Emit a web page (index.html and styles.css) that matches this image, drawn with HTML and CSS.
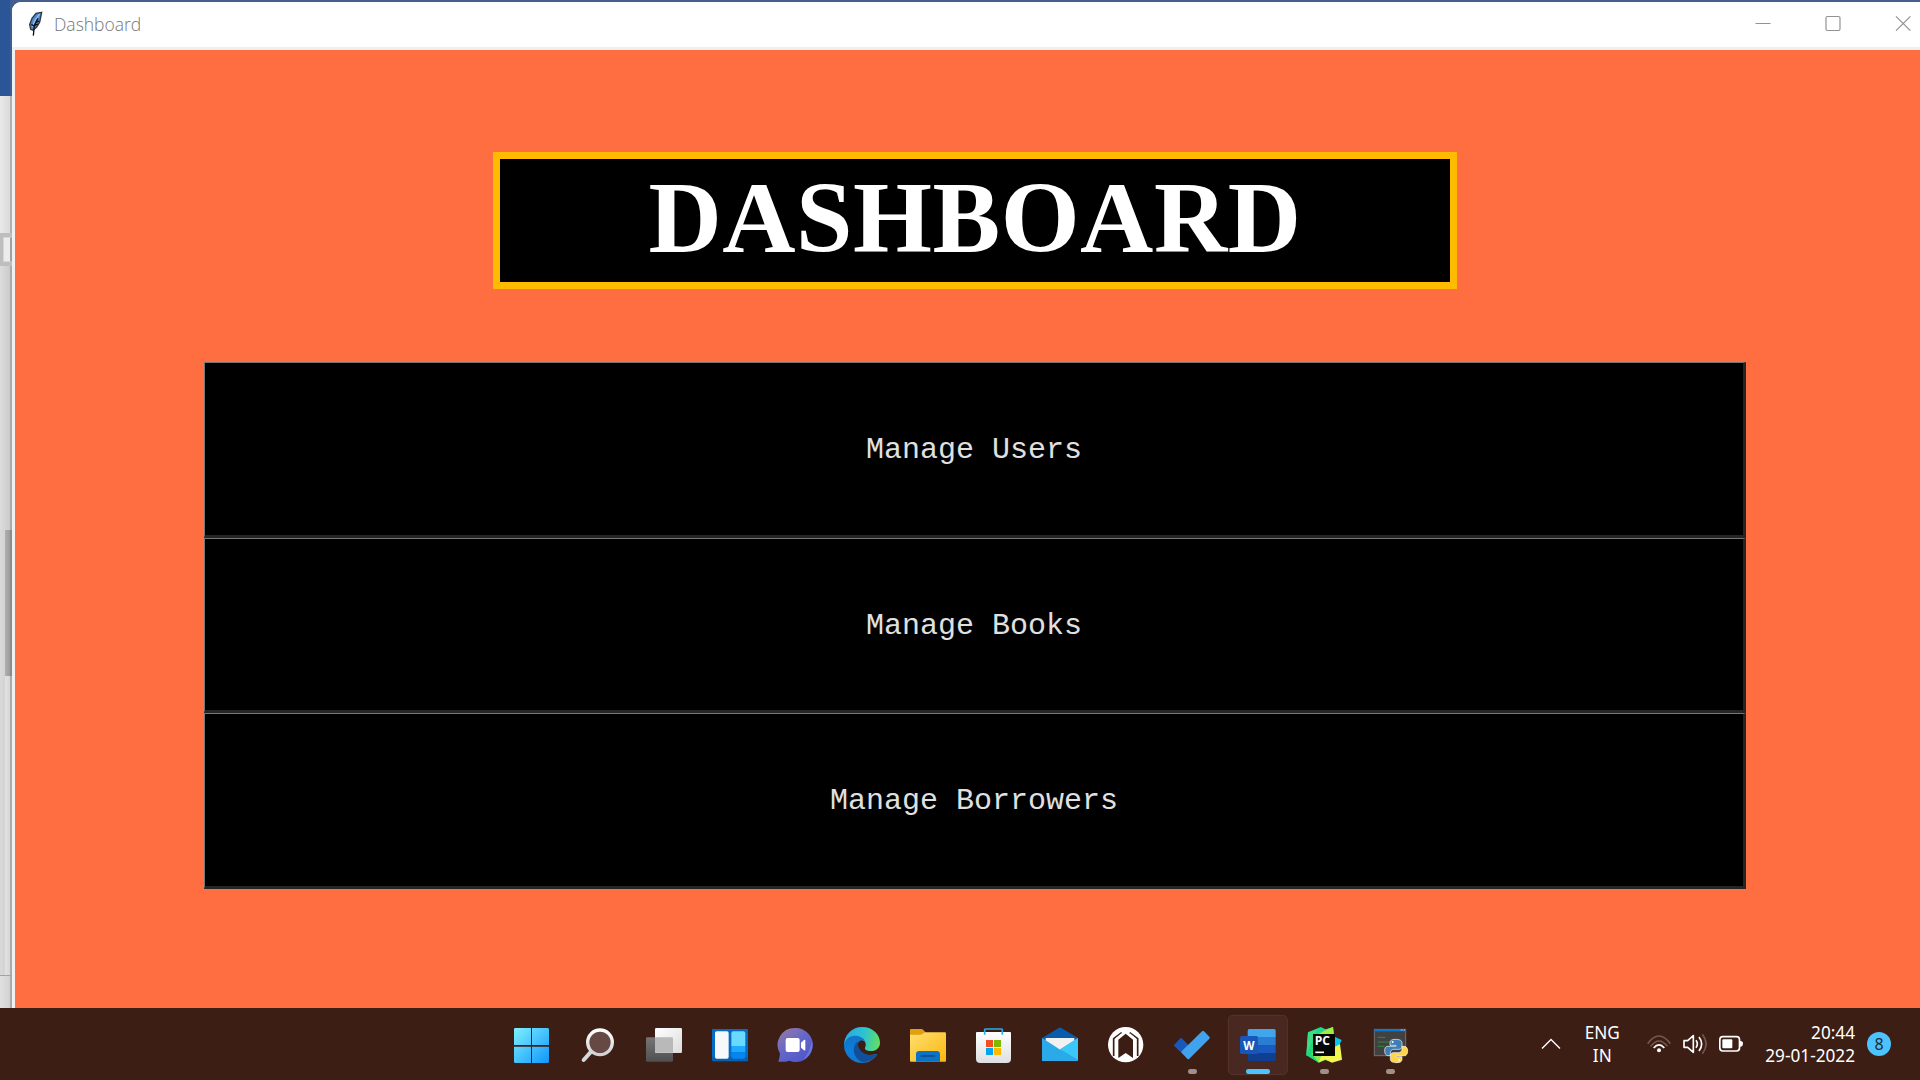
FILE: index.html
```html
<!DOCTYPE html>
<html lang="en">
<head>
<meta charset="utf-8">
<title>Dashboard</title>
<link rel="stylesheet" href="styles.css">
</head>
<body>
<div class="desktop">
  <aside class="backdrop">
    <div class="backdrop-head"></div>
    <div class="backdrop-page"></div>
    <div class="backdrop-ruler"><i></i></div>
    <div class="backdrop-page grow"></div>
    <div class="backdrop-thumb"></div>
    <div class="backdrop-track"></div>
    <div class="backdrop-foot"></div>
  </aside>
  <section class="window">
    <header class="titlebar">
      <svg class="feather" width="16" height="26" viewBox="0 0 48 78">
        <path d="M41 4 24 7 12 22 5 41 8 55 15 58 26 48 35 34 38 19z" fill="#4b8ad0" stroke="#34363a" stroke-width="4"/>
        <path d="M35 9 20 29 13 48" fill="none" stroke="#8fc0ee" stroke-width="4"/>
        <path d="M30 22 19 43 16 74M18 44l12-5M22 35l12-5M10 40l8 5" fill="none" stroke="#111" stroke-width="4"/>
      </svg>
      <span class="caption">Dashboard</span>
      <div class="controls">
        <svg width="16" height="16" viewBox="0 0 16 16"><path d="M.5 7.500h15"/></svg>
        <svg width="16" height="16" viewBox="0 0 16 16"><rect x="1" y=".5" width="14" height="14" rx="1.5"/></svg>
        <svg width="16" height="16" viewBox="0 0 16 16"><path d="M1 .3l14.400 14.400M15.400.3 1 14.700"/></svg>
      </div>
    </header>
    <main class="client">
      <h1 class="banner">DASHBOARD</h1>
      <nav class="menu">
        <button class="item">Manage Users</button>
        <button class="item">Manage Books</button>
        <button class="item">Manage Borrowers</button>
      </nav>
    </main>
  </section>
</div>
<footer class="taskbar">
  <div class="apps">
    <svg class="app" viewBox="-3 24 198 216">
      <defs><linearGradient id="win" gradientUnits="userSpaceOnUse" x1="42" y1="84" x2="147" y2="189"><stop offset="0" stop-color="#7df1ff"/><stop offset="1" stop-color="#0f96fb"/></linearGradient></defs>
      <path fill="url(#win)" d="M46 84h47v51H42V88q0-4 4-4zM96 84h46q5 0 5 4v47H96zM42 140h51v49H46q-4 0-4-4zM96 140h51v45q0 4-5 4H96z"/>
    </svg>
    <svg class="app" viewBox="195 24 198 216">
      <defs><linearGradient id="lens" x1="0" y1="0" x2="0" y2="1"><stop offset="0" stop-color="#fff"/><stop offset="1" stop-color="#cfd1d3"/></linearGradient></defs>
      <path d="M274 154 251 180" stroke="#d5d7d9" stroke-width="12" stroke-linecap="round"/>
      <circle cx="300" cy="127" r="37" fill="#674943" stroke="url(#lens)" stroke-width="10"/>
    </svg>
    <svg class="app" viewBox="393 24 198 216">
      <defs><linearGradient id="tv" x1="0" y1="0" x2="1" y2="1"><stop offset="0" stop-color="#fff"/><stop offset="1" stop-color="#dcdcdc"/></linearGradient>
      <linearGradient id="tv2" x1="0" y1="0" x2="0" y2="1"><stop offset="0" stop-color="#757575"/><stop offset="1" stop-color="#505050"/></linearGradient></defs>
      <rect x="438" y="112" width="81" height="73" rx="4" fill="url(#tv2)"/>
      <rect x="465" y="84" width="81" height="75" rx="4" fill="url(#tv)"/>
      <path d="M465 112h50q4 0 4 4v42h-50q-4 0-4-4z" fill="#b9b9b9"/>
    </svg>
    <svg class="app" viewBox="591 24 198 216">
      <rect x="636" y="87" width="108" height="97" rx="3" fill="#066bc3"/>
      <path d="M636 170h108v11q0 3-3 3H639q-3 0-3-3z" fill="#07549d" opacity=".5"/>
      <rect x="645" y="94" width="41" height="82" rx="5" fill="#f7f8fa"/>
      <path d="M700 94h30q6 0 6 6v38h-42v-38q0-6 6-6z" fill="#69d9ff"/>
      <path d="M694 138h42v19h-42z" fill="#1eaaff"/>
      <path d="M694 157h42v13q0 6-6 6h-30q-6 0-6-6z" fill="#0685ee"/>
    </svg>
    <svg class="app" viewBox="789 24 198 216">
      <defs><linearGradient id="chat" x1=".1" y1=".1" x2=".8" y2="1"><stop offset="0" stop-color="#9076a9"/><stop offset=".45" stop-color="#6467c8"/><stop offset="1" stop-color="#4f54cb"/></linearGradient></defs>
      <path d="M886 84a51 51 0 1 1-18 98q-15 5-33 3 4-13 5-24a51 51 0 0 1 46-77z" fill="url(#chat)"/>
      <path d="M936 122a51 51 0 0 1-26 57q20-26 26-57z" fill="#7698f4" opacity=".5"/>
      <rect x="857" y="114" width="42" height="42" rx="6" fill="#fff"/>
      <path d="M903 128l9-8q4-2 4 2v27q0 4-4 2l-9-8z" fill="#fff"/>
    </svg>
    <svg class="app" viewBox="27 24 198 216">
      <defs>
        <linearGradient id="edgeTop" gradientUnits="userSpaceOnUse" x1="76" y1="110" x2="180" y2="130"><stop offset="0" stop-color="#2aa9e0"/><stop offset=".5" stop-color="#2bc3d2"/><stop offset="1" stop-color="#65e05c"/></linearGradient>
        <linearGradient id="edgeLow" x1="0" y1="0" x2="0" y2="1"><stop offset="0" stop-color="#1173c8"/><stop offset=".6" stop-color="#0a7fdd"/><stop offset="1" stop-color="#1b73c8"/></linearGradient>
      </defs>
      <path d="M72 135a54 54 0 0 1 54-54c34 0 54 24 54 47 0 15-11 25-27 25-13 0-20-5-18-10 5-10 2-21-10-23-22-2-40 3-53 15z" fill="url(#edgeTop)"/>
      <path d="M72 135c4-17 16-28 32-28 15 0 26 6 32 16-9-5-21-1-23 10-3 18 13 36 38 32l21-3c-9 17-26 27-46 27a54 54 0 0 1-54-54z" fill="url(#edgeLow)"/>
      <path d="M113 124c-20 19-14 49 14 63 19-1 36-10 46-25-19 7-39 3-50-9-8-8-11-18-10-29z" fill="#10509a"/>
    </svg>
    <svg class="app" viewBox="225 24 198 216">
      <defs><linearGradient id="fold" x1="0" y1="0" x2="1" y2="1"><stop offset="0" stop-color="#ffdf72"/><stop offset="1" stop-color="#fbb70c"/></linearGradient></defs>
      <path d="M273 87h31q4 0 6 3l8 8h-4v20h-44V90q0-3 3-3z" fill="#dfa011"/>
      <path d="M270 104h32q5 0 8-4 3-3 7-3h58q3 0 3 3v82q0 3-3 3H273q-3 0-3-3z" fill="url(#fold)"/>
      <path d="M288 185v-22q0-10 10-10h52q10 0 10 10v22z" fill="#0b72c6"/>
      <path d="M304 168h39" stroke="#0c4b85" stroke-width="5" stroke-linecap="round"/>
    </svg>
    <svg class="app" viewBox="423 24 198 216">
      <defs><linearGradient id="bag" x1="0" y1="0" x2="0" y2="1"><stop offset="0" stop-color="#fff"/><stop offset="1" stop-color="#dedfe0"/></linearGradient></defs>
      <path d="M471 96h99q3 0 3 3v77q0 13-13 13h-79q-13 0-13-13V99q0-3 3-3z" fill="url(#bag)"/>
      <path d="M494 104V89q0-2 2-2h49q2 0 2 2v15" fill="none" stroke="#2aaeea" stroke-width="5"/>
      <path d="M498 120h21v21h-21z" fill="#f25022"/><path d="M522 120h21v21h-21z" fill="#7fba00"/>
      <path d="M498 144h21v21h-21z" fill="#00a4ef"/><path d="M522 144h21v21h-21z" fill="#ffb900"/>
    </svg>
    <svg class="app" viewBox="621 24 198 216">
      <defs><linearGradient id="mail" x1="0" y1="0" x2="1" y2="0"><stop offset="0" stop-color="#35b4ee"/><stop offset="1" stop-color="#30b8f2"/></linearGradient></defs>
      <path d="M666 114 716 84q4-3 8 0l50 30v20H666z" fill="#0a5cab"/>
      <path d="M677 114h86v18l-43 20-43-20z" fill="#f1f1f1"/>
      <path d="M666 114l54 35 54-35v69H666z" fill="#229ee3"/>
      <path d="M774 114v66l-54-32z" fill="#3bc8f8"/>
      <path d="M666 114 774 183H669q-3 0-3-3z" fill="url(#mail)" opacity=".5"/>
    </svg>
    <svg class="app" viewBox="819 24 198 216">
      <circle cx="917" cy="134" r="53" fill="#fff"/>
      <g fill="none" stroke="#3b1d14" stroke-width="5">
        <path d="M881 168v-52l24-18M953 168v-52l-24-18"/>
      </g>
      <path d="M895 174v-55l22-18 22 18v55l-22-15z" fill="#3b1d14"/>
      <path d="M889 174v-58l17-14M945 174v-58l-17-14" fill="none" stroke="#fff" stroke-width="5"/>
    </svg>
    <svg class="app" viewBox="57 24 198 216">
      <path d="M121 115q2-2 4 0l32 31-13 32-41-40q-2-2 0-4z" fill="#1858bd"/>
      <path d="M186 94q3-3 6 0l16 16q3 3 0 6l-60 60q-3 3-6 0l-17-18q-2-2 0-4z" fill="#41a3ee"/>
      <rect class="dot" x="144" y="207" width="27" height="15" rx="7"/>
    </svg>
    <svg class="app" viewBox="255 24 198 216">
      <rect x="265" y="46" width="177" height="178" rx="14" fill="#482820" stroke="#53352d" stroke-width="3"/>
      <path d="M328 87h74q5 0 5 5v19h-84V92q0-5 5-5z" fill="#41a5ee"/>
      <path d="M323 111h84v24h-84z" fill="#2b7cd3"/>
      <path d="M323 135h84v24h-84z" fill="#185abd"/>
      <path d="M323 159h84v19q0 5-5 5h-74q-5 0-5-5z" fill="#103f91"/>
      <rect x="300" y="108" width="54" height="54" rx="5" fill="#1856b8"/>
      <text x="327" y="149" class="word">W</text>
      <rect x="318" y="207" width="72" height="15" rx="7" fill="#4cc2ff"/>
    </svg>
    <svg class="app" viewBox="453 24 198 216">
      <path d="M584 110 605 120 593 147 580 150z" fill="#08c5ef"/>
      <path d="M504 97 542 81 557 88 579 81 582 105 525 112 518 170 499 166z" fill="#21d789"/>
      <path d="M557 90 579 81 582 105 530 106z" fill="#a5ec45"/>
      <path d="M504 97 530 90 519 120 518 168 499 166z" fill="#3ddc84"/>
      <path d="M499 166 518 120 524 165 545 168 536 188z" fill="#22d67a"/>
      <path d="M514 160 585 160 576 187 556 180 536 188z" fill="#8ee84e"/>
      <path d="M545 165 583 165 585 140 600 132 606 179 576 188 556 178 536 187z" fill="#f1f650"/>
      <rect x="519" y="102" width="66" height="66" fill="#050805"/>
      <path d="M526 157h26" stroke="#fff" stroke-width="5"/>
      <text x="524" y="136" class="pc">PC</text>
      <rect class="dot" x="540" y="207" width="27" height="15" rx="7"/>
    </svg>
    <svg class="app" viewBox="651 24 198 216">
      <rect x="703" y="88" width="94" height="79" fill="#414141" stroke="#73706f" stroke-width="3"/>
      <path d="M702 87h96v7h-96z" fill="#0878d4"/><path d="M782 90h13" stroke="#a8d6ff" stroke-width="3" stroke-dasharray="3 2"/>
      <path d="M713 112h23M713 126h42M713 139h20" stroke="#2e8d38" stroke-width="3"/>
      <path d="M767 118c-16 0-17 6-17 12v6h18v3h-25c-7 0-9 6-9 14s4 14 10 14h7v-8c0-7 4-11 11-11h15c6 0 9-4 9-9v-10c0-7-6-11-19-11z" fill="#3e7eb4" stroke="#fff" stroke-width="2"/>
      <path d="M769 188c16 0 17-6 17-12v-6h-18v-3h25c7 0 10-6 10-14s-4-14-10-14h-7v8c0 7-4 11-11 11h-15c-6 0-9 4-9 9v10c0 7 5 11 18 11z" fill="#ffd545" stroke="#fff" stroke-width="2"/>
      <circle cx="758" cy="126" r="3" fill="#fff"/><circle cx="778" cy="180" r="3" fill="#fff"/>
      <rect class="dot" x="738" y="207" width="27" height="15" rx="7"/>
    </svg>
  </div>
  <div class="tray">
    <svg class="chevron" width="20" height="12" viewBox="0 0 20 12"><path d="M1 10.5 10 1.5l9 9" fill="none" stroke="#fff" stroke-width="1.4"/></svg>
    <div class="lang">ENG<br>IN</div>
    <svg class="wifi" width="24" height="18" viewBox="0 0 72 54">
      <g fill="none" stroke-width="5"><path d="M2 26q34-46 68 0M11 34q25-32 50 0" stroke="#75584f"/><path d="M20 39q16-19 32 0" stroke="#fff"/></g>
      <circle cx="36" cy="46" r="6" fill="#fff"/>
    </svg>
    <svg class="sound" width="24" height="22" viewBox="0 0 72 66" fill="none" stroke="#fff" stroke-width="5" stroke-linejoin="round">
      <path d="M3 23h11L31 8v50L14 43H3z"/><path d="M39 22q8 11 0 22M48 12q16 21 0 42"/><path d="M58 4q23 29 0 58" stroke="#75584f"/>
    </svg>
    <svg class="battery" width="24" height="18" viewBox="0 0 72 54">
      <rect x="2.500" y="5" width="59" height="43" rx="9" fill="none" stroke="#fff" stroke-width="5"/>
      <rect x="10" y="13" width="30" height="27" rx="3" fill="#fff"/><path d="M62 18h3q7 0 7 8t-7 9h-3z" fill="#fff"/>
    </svg>
    <div class="clock">20:44<br>29-01-2022</div>
    <span class="badge">8</span>
  </div>
</footer>
</body>
</html>
```
FILE: styles.css
```css
* { box-sizing: border-box; }

body {
  margin: 0;
  width: 1920px;
  height: 1080px;
  overflow: hidden;
  display: flex;
  flex-direction: column;
  font-family: "Noto Sans", "Open Sans", sans-serif;
}

.desktop {
  height: 1008px;
  display: flex;
  padding-top: 2px;
  background: linear-gradient(#445f8c 0 50px, #2a5697 50px);
}

.backdrop {
  width: 12px;
  margin-top: -2px;
  display: flex;
  flex-direction: column;
  background: linear-gradient(90deg, #d9d9d9, #cdcdcd 10px, #aaa 10px);
}
.backdrop-head { height: 96px; background: linear-gradient(90deg, #2a5697 10px, #3d5e90 10px); }
.backdrop-page { height: 137px; background: linear-gradient(90deg, #e9e9e9, #dadada 10px, #b0b0b0 10px); }
.backdrop-page.grow { flex: 1; background: linear-gradient(90deg, #dcdcdc, #cbcbcb 10px, #aaa 10px); }
.backdrop-ruler { height: 33px; padding: 4px 0 4px 3px; background: #bebebe; }
.backdrop-ruler i { display: block; height: 25px; border: 1px solid #d6d6d6; background: #ececec; border-right: 2px solid #a0a0a0; }
.backdrop-thumb { height: 146px; margin-left: 5px; background: linear-gradient(90deg, #b0b0b0, #9c9c9c 5px, #8b8b8b 5px); }
.backdrop-track { height: 299px; margin-left: 5px; background: linear-gradient(90deg, #e2e2e2, #d7d7d7 5px, #aaa 5px); }
.backdrop-foot { height: 33px; border-top: 1px solid #a3a3a3; background: linear-gradient(90deg, #e0e0e0, #d2d2d2 10px, #aaa 10px); }

.window {
  flex: 1;
  display: flex;
  flex-direction: column;
  background: #f0f0f0;
  border-radius: 9px 0 0 0;
  overflow: hidden;
}
.titlebar {
  height: 45px;
  display: flex;
  align-items: center;
  padding: 0 9px 0 16px;
  background: #fff;
}
.feather { margin-top: -2px; }
.caption {
  margin: -2px 0 0 10px;
  font: 300 17.500px/24px "Open Sans", "Noto Sans", sans-serif;
  color: #757575;
}
.controls {
  margin: -2px 0 0 auto;
  display: flex;
  gap: 54px;
}
.controls svg { fill: none; stroke: #929292; stroke-width: 1.2; overflow: visible; }

.client {
  flex: 1;
  margin: 3px 0 0 3px;
  display: flex;
  flex-direction: column;
  align-items: center;
  padding: 102px 0 0 15px;
  background: #ff6e41;
}

.banner {
  width: 964px;
  height: 137px;
  margin: 0;
  border: 7px solid #ffbb00;
  background: #000;
  color: #fff;
  font: 700 101.500px/119px "Liberation Serif", serif;
  letter-spacing: .5px;
  text-align: center;
}
.menu {
  width: 1542px;
  margin-top: 73px;
  display: grid;
  grid-template-rows: 176px 175px 176px;
}
.item {
  padding: 2px 0 0;
  border: solid;
  border-width: 1px 3px 3px 1px;
  border-color: #777 #252525 #252525 #777;
  background: #000;
  color: #e0e0e0;
  font: 30px "Liberation Mono", monospace;
}

.taskbar {
  height: 72px;
  display: flex;
  align-items: center;
  background: #3c1e15;
}
.apps { display: flex; margin-left: 499px; }
.app { width: 66px; height: 72px; }
.dot { fill: #a0908b; }
.word { font: 700 35px "Open Sans", sans-serif; fill: #fff; text-anchor: middle; }
.pc { font: 700 36px "Open Sans", sans-serif; fill: #fff; }

.tray {
  margin-left: auto;
  margin-right: 29px;
  display: flex;
  align-items: center;
  color: #fff;
  font-size: 17.200px;
  line-height: 23px;
}
.lang { width: 36px; margin: 0 27px 0 23px; text-align: center; }
.sound { margin-left: 12px; }
.battery { margin-left: 12px; }
.clock { margin-left: 22px; text-align: right; }
.badge {
  width: 24px;
  height: 24px;
  margin-left: 12px;
  border-radius: 50%;
  background: #4cc2ff;
  color: #202b31;
  font-size: 16px;
  line-height: 24px;
  text-align: center;
}
```
